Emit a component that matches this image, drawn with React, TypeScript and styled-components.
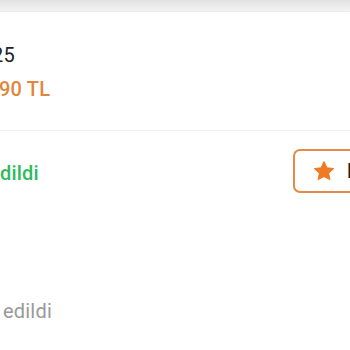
import React from "react";
import styled, { createGlobalStyle } from "styled-components";

const Global = createGlobalStyle`
  html, body { margin: 0; padding: 0; background: #ffffff; }
  body { font-family: Roboto, "Noto Sans", Arial, sans-serif; overflow: hidden; width: 350px; height: 350px; }
`;

const Page = styled.div`
  width: 350px;
  height: 350px;
  overflow: hidden;
  display: flex;
  flex-direction: column;
  background: #fff;
`;

const TopShadow = styled.div`
  height: 11px;
  background: linear-gradient(#e2e2e2, #f3f3f3);
  border-bottom: 1px solid #ececec;
  flex: none;
`;

const Section = styled.div`
  padding-top: 31px;
  padding-bottom: 29px;
  border-bottom: 1px solid #f0f0f0;
  display: flex;
  flex-direction: column;
  gap: 10px;
`;

const Line = styled.div<{ $color: string; $weight: number; $shift: number; $drop?: number }>`
  color: ${(p) => p.$color};
  font-size: 20px;
  font-weight: ${(p) => p.$weight};
  margin-left: ${(p) => p.$shift}px;
  margin-top: ${(p) => p.$drop ?? 0}px;
  line-height: 24px;
  letter-spacing: 0.2px;
  white-space: nowrap;
`;

const StatusRow = styled.div`
  display: flex;
  align-items: center;
  justify-content: space-between;
  padding-top: 18px;
  height: 44px;
`;

const RateButton = styled.button`
  display: flex;
  align-items: center;
  gap: 12px;
  height: 44px;
  width: 100px;
  margin-right: -43px;
  padding: 0 0 0 18px;
  border: 2px solid #e58a45;
  border-radius: 7px;
  background: #fff;
  color: #222;
  font-family: Roboto, "Noto Sans", Arial, sans-serif;
  font-size: 20px;
  font-weight: 500;
  flex: none;
  box-sizing: border-box;
`;

const StarIcon = () => (
  <svg width="22" height="22" viewBox="0 0 24 24">
    <path
      d="M12 1.8l3.1 6.6 7.2.9-5.3 5 1.4 7.1L12 17.9l-6.4 3.5 1.4-7.1-5.3-5 7.2-.9z"
      fill="#f07a22"
      stroke="#f07a22"
      strokeWidth="1.2"
      strokeLinejoin="round"
    />
  </svg>
);

const Footer = styled.div`
  padding-top: 106px;
`;

export default function App() {
  return (
    <Page>
      <Global />
      <TopShadow />
      <Section>
        <Line $color="#222" $weight={400} $shift={-8}>25</Line>
        <Line $color="#e0863a" $weight={500} $shift={-1}>90 TL</Line>
      </Section>
      <StatusRow>
        <Line $color="#2fb95e" $weight={500} $shift={-11} $drop={4}>edildi</Line>
        <RateButton>
          <StarIcon />
          <span>D</span>
        </RateButton>
      </StatusRow>
      <Footer>
        <Line $color="#999" $weight={400} $shift={3}>edildi</Line>
      </Footer>
    </Page>
  );
}
